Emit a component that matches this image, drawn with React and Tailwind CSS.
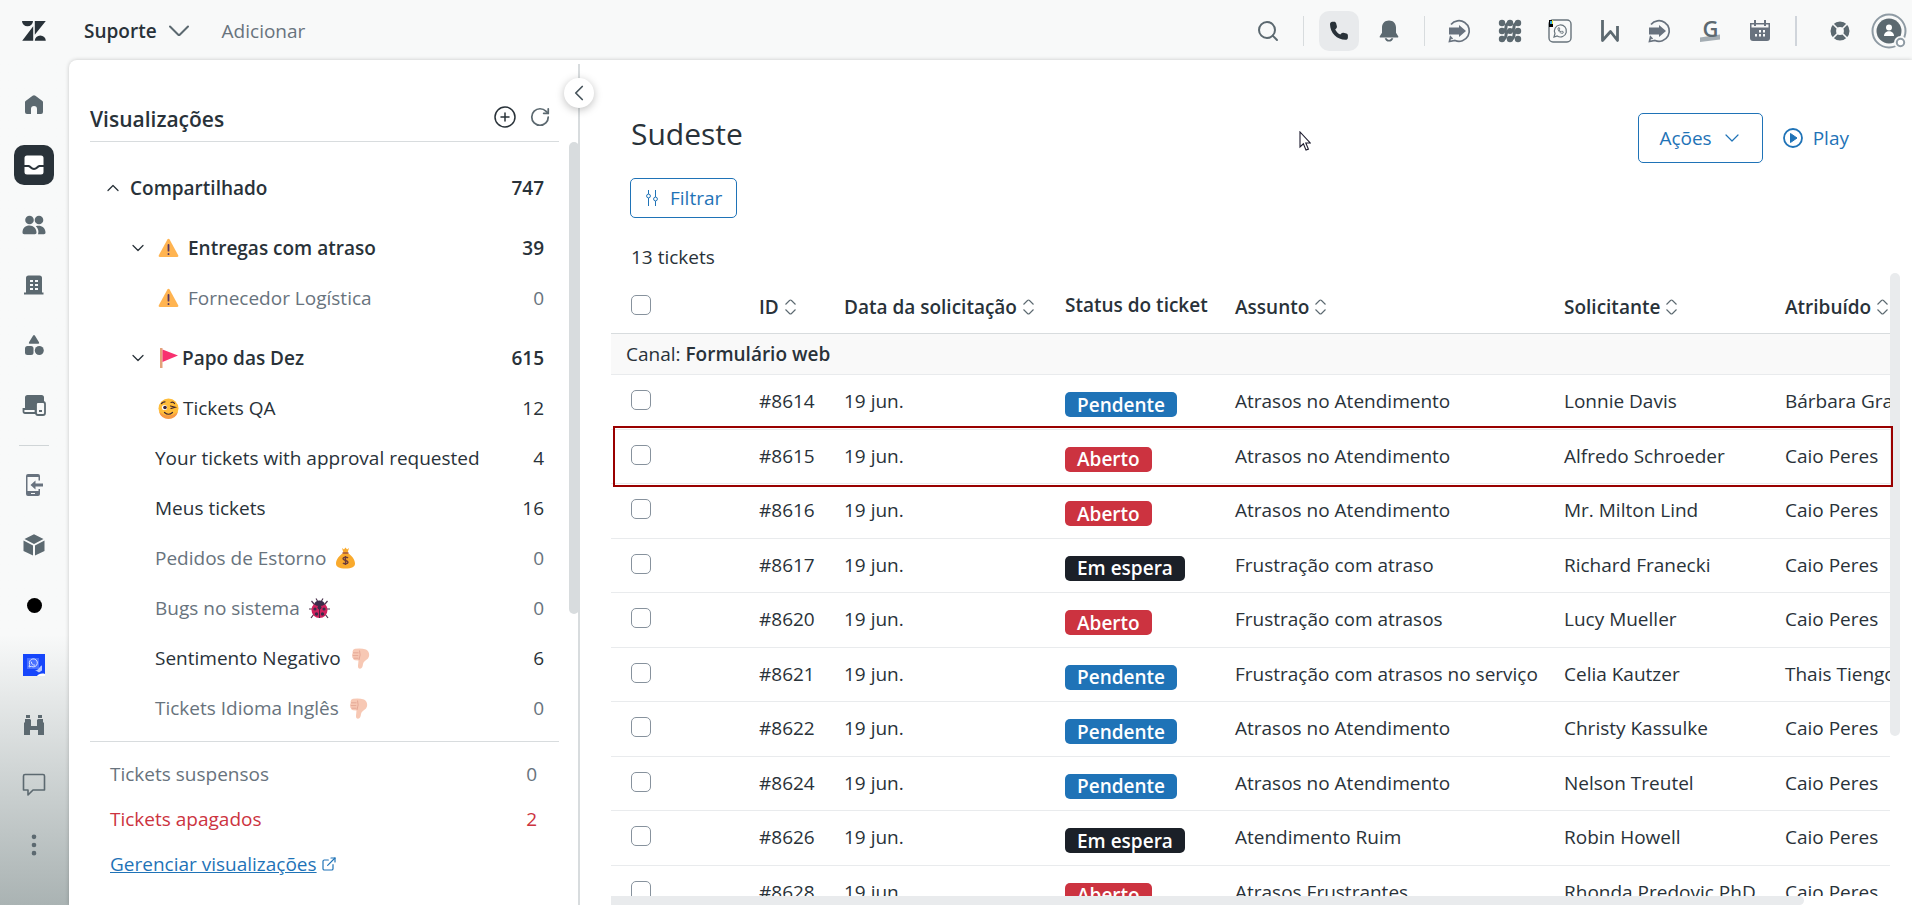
import { ChevronDown, ChevronLeft, ChevronUp, CirclePlus, RotateCw, Search, ExternalLink, EllipsisVertical } from "lucide-react";

const tickets = [
  { id: "#8614", status: "Pendente", subject: "Atrasos no Atendimento", requester: "Lonnie Davis", assignee: "Bárbara Gra" },
  { id: "#8615", status: "Aberto", subject: "Atrasos no Atendimento", requester: "Alfredo Schroeder", assignee: "Caio Peres" },
  { id: "#8616", status: "Aberto", subject: "Atrasos no Atendimento", requester: "Mr. Milton Lind", assignee: "Caio Peres" },
  { id: "#8617", status: "Em espera", subject: "Frustração com atraso", requester: "Richard Franecki", assignee: "Caio Peres" },
  { id: "#8620", status: "Aberto", subject: "Frustração com atrasos", requester: "Lucy Mueller", assignee: "Caio Peres" },
  { id: "#8621", status: "Pendente", subject: "Frustração com atrasos no serviço", requester: "Celia Kautzer", assignee: "Thais Tiengo" },
  { id: "#8622", status: "Pendente", subject: "Atrasos no Atendimento", requester: "Christy Kassulke", assignee: "Caio Peres" },
  { id: "#8624", status: "Pendente", subject: "Atrasos no Atendimento", requester: "Nelson Treutel", assignee: "Caio Peres" },
  { id: "#8626", status: "Em espera", subject: "Atendimento Ruim", requester: "Robin Howell", assignee: "Caio Peres" },
  { id: "#8628", status: "Aberto", subject: "Atrasos Frustrantes", requester: "Rhonda Predovic PhD", assignee: "Caio Peres" },
];

export default function App() {
  return (
    <div className="relative flex h-screen flex-col overflow-hidden bg-[#f8f9f9] font-['Open_Sans','Noto_Sans',sans-serif] text-[19px] leading-6 text-[#293239]">
      <TopBar />
      <div className="flex min-h-0 flex-1">
        <NavRail />
        <div className="flex min-w-0 flex-1 rounded-tl-lg bg-white shadow-[0_0_4px_rgba(0,0,0,0.2)]">
          <ViewsPanel />
          <TicketList />
        </div>
      </div>
      {/* Ponteiro do mouse */}
      <svg className="absolute top-[131px] left-[1299px]" width="12" height="21" viewBox="0 0 12 21" fill="#fff" stroke="#1c1b2e" strokeWidth="1.1">
        <path d="M1 1v15l3.4-3.2 2.6 6.3 2.4-1-2.6-6.1h4.4z" />
      </svg>
    </div>
  );
}

// --- Barra superior ---

function TopBar() {
  return (
    <header className="flex h-[60px] shrink-0 items-center pt-px text-[#5c6970]">
      <div className="flex w-[68px] shrink-0 justify-center">
        <ZendeskLogo />
      </div>
      <button className="ml-4 flex items-center gap-3 font-semibold text-[#293239]">
        Suporte
        <svg width="20" height="12" viewBox="0 0 20 12" fill="none" stroke="#5c6970" strokeWidth="2" strokeLinecap="round"><path d="M1 1.5l8 8q1 1 2 0l8-8" /></svg>
      </button>
      <button className="ml-[33px] text-[#68737d]">Adicionar</button>

      <div className="ml-auto flex items-center">
        <TopButton label="Buscar"><Search size={24} strokeWidth={2} /></TopButton>
        <span className="mx-[15px] h-[30px] w-px bg-[#d8dcde]" />
        <button aria-label="Telefone" className="mr-[5px] flex size-10 items-center justify-center rounded-[10px] bg-[#e8eaec] text-[#293239]">
          <svg width="20" height="20" viewBox="0 0 20 20" fill="currentColor"><path d="M1 3.2C1 1.9 2 .8 3.3.8h1.9c.9 0 1.7.6 1.9 1.5l.8 3c.2.7 0 1.4-.5 1.900l-1.200 1.200c1.100 2.200 2.900 4 5.100 5.100l1.200-1.200c.5-.5 1.200-.7 1.900-.5l3 .8c.9.2 1.500 1 1.500 1.900v1.900c0 1.300-1 2.400-2.400 2.400C8.100 18.800 1 11.700 1 3.200z" /></svg>
        </button>
        <TopButton label="Notificações" wide>
          <svg width="20" height="22" viewBox="0 0 20 22" fill="currentColor"><path d="M10 .5c-4.200 0-7 2.800-7 7v5.200L.8 16.200c-.4.700 0 1.400.8 1.400h16.800c.8 0 1.200-.7.8-1.400L17 12.700V7.500c0-4.200-2.800-7-7-7zM5.700 18.200c.4 2 2.200 3.400 4.300 3.400s3.900-1.400 4.300-3.400h-2c-.3.9-1.200 1.500-2.300 1.500s-2-.6-2.300-1.500z" /></svg>
        </TopButton>
        <span className="mx-[10px] h-[30px] w-px bg-[#d8dcde]" />
        <TopButton label="Entrada" wide><ArrowBubble /></TopButton>
        <TopButton label="Integrações" wide><DotsLogo /></TopButton>
        <TopButton label="WhatsApp" wide><WhatsBox /></TopButton>
        <TopButton label="Wiki" wide>
          <svg width="20" height="24" viewBox="0 0 20 24" fill="none" stroke="currentColor" strokeWidth="2.800"><path d="M2.500 1v20.500l8-9 7 9V7" strokeLinejoin="round" /></svg>
        </TopButton>
        <TopButton label="Transferir" wide><ArrowBubble /></TopButton>
        <TopButton label="Gramática" wide>
          <svg className="overflow-visible" width="22" height="24" viewBox="0 0 22 24">
            <path d="M1 18.500l20-3v5L1 23z" fill="#a4adb3" />
            <text x="11.500" y="17.500" textAnchor="middle" fontSize="22" fontWeight="600" fill="#5c6970">G</text>
          </svg>
        </TopButton>
        <TopButton label="Calendário" wide><CalendarIcon /></TopButton>
        <span className="mr-[18px] ml-[10px] h-[30px] w-[2px] bg-[#d0d5db]" />
        <TopButton label="Ajuda" wide>
          <svg width="20" height="20" viewBox="0 0 20 20" fill="none" stroke="#5c6970">
            <circle cx="10" cy="10" r="6.700" strokeWidth="5.600" />
            <path d="M3 3l5 5M17 3l-5 5M3 17l5-5M17 17l-5-5" stroke="#f8f9f9" strokeWidth="1.600" />
          </svg>
        </TopButton>
        <button aria-label="Perfil" className="mr-[5px] ml-[6px]"><Avatar /></button>
      </div>
    </header>
  );
}

function TopButton({ label, wide, children }) {
  return (
    <button aria-label={label} className={`flex h-10 items-center justify-center ${wide ? "w-[50px]" : "w-10"}`}>
      {children}
    </button>
  );
}

function ZendeskLogo() {
  return (
    <svg width="24" height="20" viewBox="0 0 24 20" fill="#293239">
      <path d="M0 0h11a5.500 5.300 0 0 1-11 0zM11.200 5.200V19.700H.2zM12.800 0h11L12.800 13.700zM12.800 19.700a5.500 5.300 0 0 1 11 0z" />
    </svg>
  );
}

function ArrowBubble() {
  return (
    <svg width="24" height="24" viewBox="0 0 24 24" fill="none" stroke="#68727e" strokeWidth="1.700">
      <path d="M3 5.500A10.300 10.300 0 1 1 7 21.500L1.500 22.500l1-4.500 2 2" />
      <path d="M1 8.500h10V6l7 6-7 6v-2.500H1z" fill="#68727e" stroke="none" />
    </svg>
  );
}

function DotsLogo() {
  return (
    <svg width="24" height="24" viewBox="0 0 24 24" stroke="#5c6970" strokeWidth="3" strokeLinecap="round" fill="#5c6970">
      <path d="M4 12q4 0 4-4t4-4M4 20q4 0 4-4t4-4 4-4 4-4M12 20q4 0 4-4t4-4" fill="none" />
      <g stroke="none">
        <circle cx="4" cy="4" r="3.200" /><circle cx="12" cy="4" r="3.200" /><circle cx="20" cy="4" r="3.200" />
        <circle cx="4" cy="12" r="3.200" /><circle cx="12" cy="12" r="3" /><circle cx="20" cy="12" r="3.200" />
        <circle cx="4" cy="20" r="3.200" /><circle cx="12" cy="20" r="3.200" /><circle cx="20" cy="20" r="3.200" />
      </g>
    </svg>
  );
}

function WhatsBox() {
  return (
    <svg width="24" height="24" viewBox="0 0 24 24" fill="none" stroke="#68747c">
      <rect x="1" y="1" width="22" height="22" rx="4" strokeWidth="1.400" />
      <path d="M6 18l1-3.500A6 6 0 1 1 9.200 17z" strokeWidth="1.200" />
      <path d="M10 9c-.5 2.500 2.500 6 5 5.200l.3-1.400-1.500-.8-.8.8c-.9-.4-1.500-1-1.800-1.900l.7-.8-.7-1.500z" strokeWidth=".9" />
      <path d="M1 1h4v7H1z" fill="#000" stroke="none" />
      <path d="M2 2h2v3H2z" fill="#2aa9e0" stroke="none" /><path d="M4 1h1v4H4z" fill="#e8e337" stroke="none" />
    </svg>
  );
}

function CalendarIcon() {
  return (
    <svg width="22" height="22" viewBox="0 0 22 22" fill="#68727e">
      <path d="M1 3h20v15a3 3 0 0 1-3 3H4a3 3 0 0 1-3-3z" />
      <path d="M2.500 4.500h17v3h-17z" fill="#f8f9f9" />
      <path d="M5 0h2v6H5zM15 0h2v6h-2z" />
      <path d="M10 10h2v2.500h-2zM14 10h2v2.500h-2zM6 14h2v2.500H6zM10 14h2v2.500h-2zM14 14h2v2.500h-2z" fill="#f8f9f9" />
    </svg>
  );
}

function Avatar() {
  return (
    <svg width="36" height="36" viewBox="0 0 36 36" fill="none">
      <circle cx="18" cy="18" r="16.500" stroke="#8f9ba4" strokeWidth="2" />
      <circle cx="18" cy="18" r="12.500" fill="#5c6970" />
      <circle cx="18" cy="14.500" r="3" fill="#fff" />
      <path d="M13 23c0-3 2.300-4.700 5-4.700s5 1.700 5 4.700z" fill="#fff" />
      <circle cx="29.500" cy="29.500" r="6.500" fill="#f8f9f9" />
      <circle cx="29.500" cy="29.500" r="3.700" fill="#fff" stroke="#8f9ba4" strokeWidth="2" />
    </svg>
  );
}

// --- Menu lateral ---

function NavRail() {
  return (
    <nav className="flex w-[69px] shrink-0 flex-col items-center gap-5 bg-linear-to-b from-[#f8f9f9] from-68% to-[#aab3b3] pt-[25px] pr-px text-[#5c6970]">
      <NavButton label="Início">
        <svg width="20" height="20" viewBox="0 0 20 20" fill="currentColor"><path d="M8.600.8Q10-.3 11.400.8l7 5.200q.6.500.6 1.300V17a2 2 0 0 1-2 2h-4v-5a3 3 0 0 0-6 0v5H3a2 2 0 0 1-2-2V7.300q0-.8.600-1.300z" /></svg>
      </NavButton>
      <NavButton label="Visualizações" active>
        <svg width="20" height="20" viewBox="0 0 20 20" fill="#fff"><path d="M3 .5h14a2.500 2.500 0 0 1 2.500 2.500v7h-4.300c-1.900 0-3 3-5.200 3s-3.300-3-5.200-3H.5V3A2.500 2.500 0 0 1 3 .5z" /><path d="M.5 12h3.800c1.200 0 2.700 3 5.700 3s4.500-3 5.700-3h3.800v5a2.500 2.500 0 0 1-2.500 2.500H3A2.500 2.500 0 0 1 .5 17z" /></svg>
      </NavButton>
      <NavButton label="Clientes">
        <svg width="24" height="20" viewBox="0 0 24 20" fill="currentColor"><circle cx="7.500" cy="5" r="4.300" /><circle cx="17" cy="5" r="4.300" /><path d="M.5 17.500c0-4.500 3-7 7-7s7 3 7 7c0 1-.6 1.700-1.700 1.700H2.200c-1 0-1.700-.7-1.700-1.700zM16 19.200c1.200-3.300-.2-6.300-2.200-8 4.800-1.600 9.700 1.300 9.700 6.300 0 1-.6 1.700-1.600 1.700z" /></svg>
      </NavButton>
      <NavButton label="Organizações">
        <svg width="22" height="20" viewBox="0 0 22 20"><path d="M3 3a2.500 2.500 0 0 1 2.500-2.500h11A2.500 2.500 0 0 1 19 3v14.500h1.500v2H1v-2h2z" fill="currentColor" /><path d="M7 5h3v2H7zM12 5h3v2h-3zM7 9h3v2H7zM12 9h3v2h-3zM7 13h3v2H7zM12 13h3v2h-3z" fill="#f8f9f9" /></svg>
      </NavButton>
      <NavButton label="Objetos">
        <svg width="20" height="22" viewBox="0 0 20 22" fill="currentColor"><path d="M9 1.800q1-1.600 2 0l4 6.400q.8 1.600-1 1.600H6q-1.800 0-1-1.600z" /><rect x="1" y="12" width="8.500" height="9" rx="2.500" /><circle cx="15.300" cy="16.500" r="4.500" /></svg>
      </NavButton>
      <NavButton label="Dispositivos">
        <svg width="24" height="22" viewBox="0 0 24 22"><path d="M3 3.500A2.500 2.500 0 0 1 5.500 1h14A2.500 2.500 0 0 1 22 3.500V14H3z" fill="currentColor" /><path d="M1.500 15h12v4H3q-1.500 0-1.500-1.500z" fill="#f8f9f9" stroke="currentColor" strokeWidth="1.800" /><rect x="14" y="8" width="9" height="13" rx="2" fill="#f8f9f9" stroke="currentColor" strokeWidth="1.800" /><path d="M17 16h3v2h-3z" fill="currentColor" /></svg>
      </NavButton>
      <span className="-mb-px h-px w-[30px] bg-[#d0d5d7]" />
      <NavButton label="Aplicativo móvel">
        <svg width="22" height="24" viewBox="0 0 22 24" fill="#68727e"><path d="M3 3a2 2 0 0 1 2-2h10a2 2 0 0 1 2 2v4.500h-1.500V4h-11v14h11v-2H17v5a2 2 0 0 1-2 2H5a2 2 0 0 1-2-2z" /><path d="M7.500 12l5-4.500v3H20v3h-7.500v3z" /><path d="M8 20h4v1H8z" fill="#f8f9f9" /></svg>
      </NavButton>
      <NavButton label="Pacotes">
        <svg width="22" height="22" viewBox="0 0 22 22" fill="currentColor"><path d="M11 .3l9.500 4.700L11 10 1.500 5zM.5 6.500l9.500 5v10L.5 17zM21.500 6.500l-9.500 5v10l9.500-4.500z" /></svg>
      </NavButton>
      <NavButton label="Gravação"><span className="size-[15px] rounded-full bg-black" /></NavButton>
      <NavButton label="Mensagens">
        <svg width="22" height="22" viewBox="0 0 22 22"><path d="M0 0h22v22H0z" fill="#1646fb" /><path d="M4 4h12v11H4z" fill="#4a70ff" /><path d="M6 13l.7-2.500a4 4 0 1 1 1.600 1.800zM8.300 7.700c0 2 1.500 3.500 3.700 3.500" fill="none" stroke="#dbe4ff" /><path d="M12 16c4 1 4-4 7-4.500v5l-3 2z" fill="#b5c6ff" /><path d="M14 22c1-2 5-3 8-2v2z" fill="#fff" /></svg>
      </NavButton>
      <NavButton label="Explorar">
        <svg width="22" height="22" viewBox="0 0 22 22" fill="currentColor"><path d="M3 1h4v3H3zM15 1h4v3h-4zM2 5h5l1 1v6h6V6l1-1h5v3l1 1v12h-6v-5H7v5H1V9l1-1z" /></svg>
      </NavButton>
      <NavButton label="Comentários">
        <svg width="24" height="24" viewBox="0 0 24 24" fill="none" stroke="currentColor" strokeWidth="1.600" strokeLinejoin="round"><path d="M3 1.500h18q1.500 0 1.500 1.500v14H11l-5 5v-5H1.500V3Q1.500 1.500 3 1.500z" /></svg>
      </NavButton>
      <NavButton label="Mais">
        <EllipsisVertical size={28} strokeWidth={2} />
      </NavButton>
    </nav>
  );
}

function NavButton({ label, active, children }) {
  return (
    <button aria-label={label} className={`flex size-10 shrink-0 items-center justify-center rounded-[10px] ${active ? "bg-[#293239]" : ""}`}>
      {children}
    </button>
  );
}

// --- Painel de visualizações ---

function ViewsPanel() {
  return (
    <aside className="relative flex w-[511px] shrink-0 flex-col pl-[21px]">
      <div className="mr-[21px] flex h-[82px] items-end justify-between border-b border-[#d8dcde] pr-2 pb-[10px]">
        <h2 className="text-[21px] leading-6 font-semibold">Visualizações</h2>
        <div className="flex gap-3 self-end pb-[2px] text-[#293239]">
          <button aria-label="Adicionar visualização"><CirclePlus size={24} strokeWidth={1.500} /></button>
          <button aria-label="Atualizar" className="text-[#5c6970]"><RotateCw size={22} strokeWidth={1.900} /></button>
        </div>
      </div>

      <div className="flex flex-col pt-[21px] pr-9">
        <button className="flex h-[50px] items-center pl-[13px] font-semibold">
          <ChevronUp size={20} strokeWidth={1.500} />
          <span className="ml-[7px]">Compartilhado</span>
          <span className="ml-auto">747</span>
        </button>
        <ViewGroup name="Entregas com atraso" count="39" icon={<Warning />} spaced />
        <ViewRow name="Fornecedor Logística" count="0" icon={<Warning />} spaced muted />
        <ViewGroup name="Papo das Dez" count="615" icon={<Flag />} />
        <ViewRow name="Tickets QA" count="12" icon={<Wink />} />
        <ViewRow name="Your tickets with approval requested" count="4" />
        <ViewRow name="Meus tickets" count="16" />
        <ViewRow name="Pedidos de Estorno" count="0" after={<MoneyBag />} muted />
        <ViewRow name="Bugs no sistema" count="0" after={<Ladybug />} muted />
        <ViewRow name="Sentimento Negativo" count="6" after={<ThumbDown />} />
        <ViewRow name="Tickets Idioma Inglês" count="0" after={<ThumbDown />} muted />
      </div>

      <div className="mt-2 mr-[21px] border-t border-[#d8dcde] pt-[9px] pr-[22px] pl-5">
        <a href="#suspensos" className="flex h-[45px] items-center justify-between text-[#68737d]">
          Tickets suspensos <span>0</span>
        </a>
        <a href="#apagados" className="flex h-[45px] items-center justify-between text-[#cc3340]">
          Tickets apagados <span>2</span>
        </a>
        <a href="#gerenciar" className="flex h-[45px] items-center gap-1 text-[#1f73b7]">
          <span className="underline">Gerenciar visualizações</span> <ExternalLink size={16} strokeWidth={1.800} />
        </a>
      </div>

      {/* Divisória, barra de rolagem e botão de recolher */}
      <span className="absolute top-1 right-0 bottom-0 w-[2px] bg-[#d8dcde]" />
      <span className="absolute top-[82px] right-[1px] h-[472px] w-[10px] rounded-full bg-[#d8dcde]" />
      <button aria-label="Recolher painel" className="absolute top-[18px] right-[-14px] z-10 flex size-[30px] items-center justify-center rounded-full bg-white shadow-[0_2px_8px_rgba(0,0,0,0.25)]">
        <ChevronLeft size={26} strokeWidth={1.600} className="text-[#47545c]" />
      </button>
    </aside>
  );
}

function ViewGroup({ name, count, icon, spaced }) {
  return (
    <button className="mt-[10px] flex h-[50px] items-center pl-[38px] font-semibold">
      <ChevronDown size={20} strokeWidth={1.500} />
      <span className="ml-[10px]">{icon}</span>
      <span className={spaced ? "ml-[9px]" : "ml-1"}>{name}</span>
      <span className="ml-auto">{count}</span>
    </button>
  );
}

function ViewRow({ name, count, icon, after, spaced, muted }) {
  return (
    <a href="#view" className={`flex h-[50px] items-center ${icon ? "pl-[68px]" : "pl-[65px]"} ${muted ? "text-[#68737d]" : ""}`}>
      {icon}
      <span className={icon ? (spaced ? "ml-[9px]" : "ml-1") : ""}>{name}</span>
      {after && <span className="ml-[9px]">{after}</span>}
      <span className="ml-auto">{count}</span>
    </a>
  );
}

function Warning() {
  return (
    <svg width="21" height="20" viewBox="0 0 21 20">
      <path d="M9.400 1.600q1.100-1.800 2.200 0l8.600 15.700q.7 1.700-1.200 1.700H2q-1.900 0-1.200-1.700z" fill="#ffb451" />
      <path d="M10.500 7v5.700M10.500 15.800v.4" stroke="#533566" strokeWidth="1.800" strokeLinecap="round" />
    </svg>
  );
}

function Flag() {
  return (
    <svg width="20" height="22" viewBox="0 0 20 22">
      <path d="M2 1h2.500v20H2z" fill="#e3a27b" />
      <path d="M4.500 2.500L20 8.500 4.500 15z" fill="#f8316f" />
    </svg>
  );
}

function Wink() {
  return (
    <svg width="21" height="21" viewBox="0 0 21 21" fill="none" stroke="#3d2432" strokeLinecap="round">
      <circle cx="10.500" cy="10.500" r="10" fill="#ffbd3a" stroke="none" />
      <path d="M1 14a10 10 0 0 0 19 0q-9.500 7-19 0z" fill="#f79a44" stroke="none" />
      <circle cx="6.500" cy="9.500" r="2.600" fill="#fff" stroke="none" />
      <circle cx="7" cy="9.500" r="1.800" fill="#3d2432" stroke="none" />
      <path d="M12.500 8l4.500 1.200-4 1.300M3.500 5.500q1.500-1.700 3.500-1.700M13 4.500q2.300-1 3.500 1M6.500 14.500q4 3.500 8 0" strokeWidth="1.200" />
    </svg>
  );
}

function MoneyBag() {
  return (
    <svg width="21" height="22" viewBox="0 0 21 22">
      <path d="M7 1l2 1.500L10.500.5 12 2.500 14 1l-1.500 5c4 2 7.500 6.500 7.500 10.500 0 3.500-3 5-9.500 5S1 20 1 16.500C1 12.500 4.500 8 8.500 6z" fill="#f9aa2d" />
      <path d="M7.500 6h6" stroke="#a45438" strokeWidth="1.500" />
      <path d="M13 11c-1-1.200-5-1.200-5 .8s5 1.400 5 3.400-4 2-5 .6M10.500 9v9" fill="none" stroke="#6b3b3b" strokeWidth="1.400" />
    </svg>
  );
}

function Ladybug() {
  return (
    <svg width="21" height="21" viewBox="0 0 21 21">
      <path d="M5 6L2.500 3M16 6l2.500-3M4 11H0M17 11h4M5 16l-3 4M16 16l3 4M8.500 3L7 .5M12.500 3L14 .5" stroke="#4b344f" strokeWidth="1.200" />
      <circle cx="10.500" cy="12" r="8" fill="#d0225e" />
      <path d="M5 6.500C6 1 15 1 16 6.500q-5.500 3-11 0z" fill="#3c2b4a" />
      <path d="M10.500 7v13" stroke="#4b1f42" />
      <g fill="#3c2b4a"><circle cx="10.500" cy="9.500" r="2" /><circle cx="6" cy="11" r="1.600" /><circle cx="15" cy="11" r="1.600" /><circle cx="7.500" cy="16" r="1.700" /><circle cx="13.500" cy="16" r="1.700" /></g>
    </svg>
  );
}

function ThumbDown() {
  return (
    <svg width="21" height="21" viewBox="0 0 21 21">
      <path d="M5 .8Q11-.3 16 1.500c3.500 1.500 4 6.500 2 9-2 2-4.500 3-5 5.500-.3 2.500-.8 4.700-3 4.700-2 0-2.300-2-1.800-5l.3-3.200-3.500-.3Q3 12 3 10.300 2 9.500 2.300 8 1.700 6.500 2.700 5 2 1.500 5 .8z" fill="#f7c8b4" />
      <path d="M3 4.800h5.500M2.800 7.600h5.500M3.500 10.200h5M9.500 2.500q1.500 4-.5 9.500" stroke="#dfa08e" strokeWidth=".8" fill="none" />
    </svg>
  );
}

// --- Lista de tickets ---

function TicketList() {
  return (
    <main className="flex min-w-0 flex-1 flex-col pl-[31px]">
      <div className="flex items-start justify-between pt-[53px] pr-[63px] pl-5">
        <h1 className="pt-1 text-[30px] leading-[34px]">Sudeste</h1>
        <div className="flex items-center text-[#1f73b7]">
          <button className="flex h-[50px] items-center gap-2 rounded-[5px] border border-[#1f73b7] pr-[18px] pl-5">
            Ações <ChevronDown size={24} strokeWidth={1.200} />
          </button>
          <button className="ml-5 flex items-center gap-[10px]">
            <svg width="20" height="20" viewBox="0 0 20 20" fill="none"><circle cx="10" cy="10" r="9" stroke="#1f73b7" strokeWidth="1.800" /><path d="M7.500 5.500v9l6.500-4.500z" fill="#1f73b7" stroke="#1f73b7" strokeLinejoin="round" /></svg>
            Play
          </button>
        </div>
      </div>
      <div className="pt-[15px] pl-[19px]">
        <button className="flex h-10 items-center gap-[10px] rounded-[5px] border border-[#1f73b7] px-[14px] text-[#1f73b7]">
          <svg width="15" height="16" viewBox="0 0 15 16" fill="none" stroke="currentColor"><path d="M3.500 0v4M3.500 8v8M10.500 0v7M10.500 11v5" /><circle cx="3.500" cy="6" r="1.900" /><circle cx="10.500" cy="9" r="1.900" /></svg>
          Filtrar
        </button>
      </div>
      <p className="pt-[27px] pl-5">13 tickets</p>

      <div className="relative mt-1 flex min-h-0 flex-1 pr-3">
        <div className="min-w-0 flex-1 overflow-hidden">
          <table className="w-full table-fixed border-collapse text-left whitespace-nowrap">
            <colgroup>
              <col className="w-[148px]" />
              <col className="w-[85px]" />
              <col className="w-[221px]" />
              <col className="w-[170px]" />
              <col className="w-[329px]" />
              <col className="w-[221px]" />
              <col />
            </colgroup>
            <thead>
              <tr className="h-[60px] border-b border-[#d8dcde]">
                <th className="pt-1 pl-5"><Tick label="Selecionar todos" /></th>
                <Head sortable>ID</Head>
                <Head sortable>Data da solicitação</Head>
                <Head>Status do ticket</Head>
                <Head sortable>Assunto</Head>
                <Head sortable>Solicitante</Head>
                <Head sortable>Atribuído</Head>
              </tr>
            </thead>
            <tbody>
              <tr className="h-[41px] border-b border-[#e9ebed] bg-[#f9f9f9]">
                <td colSpan={7} className="pl-[15px]">
                  Canal: <strong className="font-semibold">Formulário web</strong>
                </td>
              </tr>
              {tickets.map((ticket) => (
                <TicketRow key={ticket.id} {...ticket} />
              ))}
            </tbody>
          </table>
        </div>
        <span className="h-[463px] w-[10px] shrink-0 rounded-full bg-[#e9ebed]" />
        {/* Contorno vermelho do ticket #8615 */}
        <span className="pointer-events-none absolute top-[153px] right-[19px] left-[2px] h-[61px] border-2 border-[#990000]" />
      </div>
      <span className="mr-[108px] h-[9px] shrink-0 rounded-r-full bg-[#e9ebed]" />
    </main>
  );
}

function Head({ sortable, children }) {
  return (
    <th className={`font-semibold ${sortable ? "pt-2" : "pt-1"}`}>
      {sortable ? (
        <button className="flex items-center gap-[6px]">
          {children}
          <svg width="11" height="16" viewBox="0 0 11 16" fill="none" stroke="#5c6970" strokeWidth="1.100"><path d="M.5 5.500l4-4q1-1 2 0l4 4M.5 10.500l4 4q1 1 2 0l4-4" /></svg>
        </button>
      ) : children}
    </th>
  );
}

function Tick({ label }) {
  return (
    <input type="checkbox" aria-label={label} className="block size-5 appearance-none rounded-[5px] border border-[#87929d] bg-white" />
  );
}

function TicketRow({ id, status, subject, requester, assignee }) {
  const statusColors = {
    "Pendente": "bg-[#1f73b7]",
    "Aberto": "bg-[#cc3340]",
    "Em espera": "bg-[#1b2028]",
  };

  return (
    <tr className="h-[55px] border-b border-[#e9ebed] odd:h-[54px]">
      <td className="pb-[3px] pl-5"><Tick label={`Selecionar ${id}`} /></td>
      <td className="pb-px">{id}</td>
      <td className="pb-px">19 jun.</td>
      <td>
        <span className={`mt-[6px] inline-flex h-[25px] items-center rounded-[5px] px-3 align-middle font-semibold text-white ${statusColors[status]}`}>
          {status}
        </span>
      </td>
      <td className="pb-px">{subject}</td>
      <td className="pb-px">{requester}</td>
      <td className="pb-px">{assignee}</td>
    </tr>
  );
}
